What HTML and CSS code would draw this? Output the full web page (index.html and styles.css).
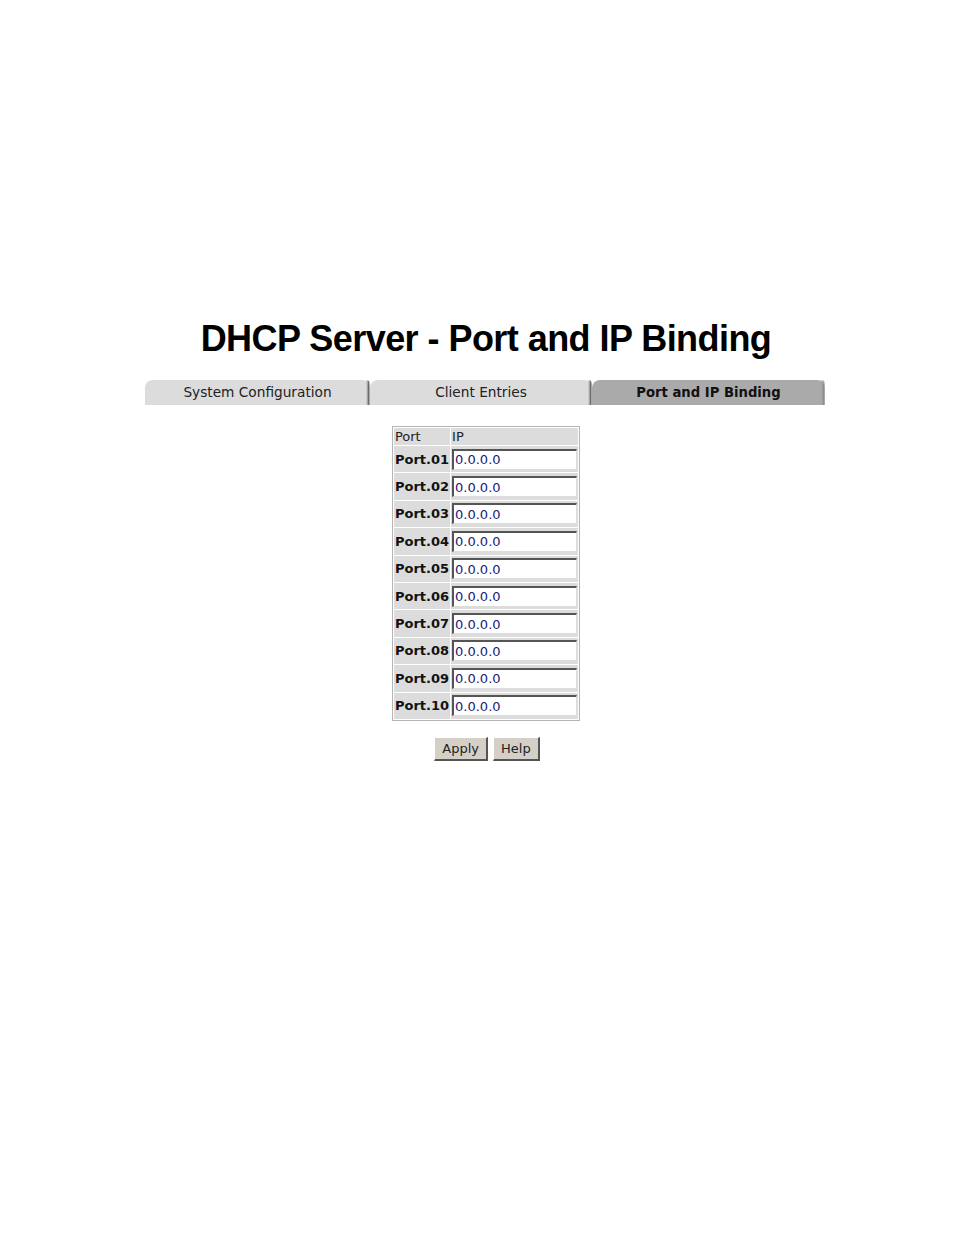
FILE: index.html
```html
<!DOCTYPE html>
<html>
<head>
<meta charset="utf-8">
<link rel="stylesheet" href="styles.css">
</head>
<body>
<div class="page">
  <h1 class="title">DHCP Server - Port and IP Binding</h1>
  <div class="tabs">
    <div class="tab t1">System Configuration</div>
    <div class="tab t2">Client Entries</div>
    <div class="tab t3 active">Port and IP Binding</div>
  </div>
  <table class="grid">
    <tr class="head"><td class="c1">Port</td><td class="c2">IP</td></tr>
    <tr><td class="c1 lbl">Port.01</td><td class="c2"><input class="ip" type="text" value="0.0.0.0"></td></tr>
    <tr><td class="c1 lbl">Port.02</td><td class="c2"><input class="ip" type="text" value="0.0.0.0"></td></tr>
    <tr><td class="c1 lbl">Port.03</td><td class="c2"><input class="ip" type="text" value="0.0.0.0"></td></tr>
    <tr><td class="c1 lbl">Port.04</td><td class="c2"><input class="ip" type="text" value="0.0.0.0"></td></tr>
    <tr><td class="c1 lbl">Port.05</td><td class="c2"><input class="ip" type="text" value="0.0.0.0"></td></tr>
    <tr><td class="c1 lbl">Port.06</td><td class="c2"><input class="ip" type="text" value="0.0.0.0"></td></tr>
    <tr><td class="c1 lbl">Port.07</td><td class="c2"><input class="ip" type="text" value="0.0.0.0"></td></tr>
    <tr><td class="c1 lbl">Port.08</td><td class="c2"><input class="ip" type="text" value="0.0.0.0"></td></tr>
    <tr><td class="c1 lbl">Port.09</td><td class="c2"><input class="ip" type="text" value="0.0.0.0"></td></tr>
    <tr><td class="c1 lbl">Port.10</td><td class="c2"><input class="ip" type="text" value="0.0.0.0"></td></tr>
  </table>
  <div class="buttons">
    <button class="btn">Apply</button>
    <button class="btn">Help</button>
  </div>
</div>
</body>
</html>
```
FILE: styles.css
```css
html, body { margin: 0; padding: 0; background: #fff; }
.page {
  width: 954px;
  box-sizing: border-box;
  padding: 318px 0 0 16px;
  display: flex;
  flex-direction: column;
  align-items: center;
  font-family: "DejaVu Sans", Verdana, sans-serif;
  color: #000;
}
.title {
  margin: 0 0 0 2px;
  font-family: "Liberation Sans", Arial, sans-serif;
  font-weight: bold;
  font-size: 36px;
  letter-spacing: -0.55px;
  line-height: 42px;
  color: #000;
}
.tabs {
  margin-top: 20px;
  display: flex;
  width: 680px;
}
.tab {
  height: 25px;
  line-height: 25px;
  text-align: center;
  font-size: 13.7px;
  color: #222;
  background: #dcdcdc;
  border-top-left-radius: 8px;
  border-top-right-radius: 8px;
  position: relative;
}
.t1 { width: 225px; }
.t2 { width: 222px; }
.t3 { width: 233px; }
.tab::after {
  content: "";
  position: absolute;
  right: 0;
  top: 0;
  width: 4px;
  height: 100%;
  background: linear-gradient(to right, #dcdcdc 0, #888 40%, #333 60%, #bbb 100%);
  border-top-right-radius: 6px;
  opacity: 0.7;
}
.tab.active {
  background: #aaaaaa;
  font-weight: bold;
  color: #111;
  font-size: 13.2px;
}
.tab.active::after {
  background: linear-gradient(to right, #aaa 0, #999 40%, #777 70%, #ccc 100%);
}
.grid {
  margin: 21px 0 0 2px;
  border-collapse: separate;
  border-spacing: 1px;
  border: 1px solid #b4b4b4;
  background: #ffffff;
  font-size: 13px;
}
.grid td {
  background: #dcdcdc;
  padding: 0 1px;
  height: 26.4px;
}
.grid tr.head td {
  height: 17px;
  color: #222;
  line-height: 17px;
}
.c1 { width: 54px; }
.lbl { font-weight: bold; color: #111; }
.c2 { padding: 0 1px; }
.ip {
  display: block;
  box-sizing: border-box;
  width: 125px;
  height: 21px;
  margin: 0;
  padding: 0 1px;
  font-family: "DejaVu Sans", Verdana, sans-serif;
  font-size: 13px;
  color: #1a1a7a;
  background: #fff;
  border: 2px solid;
  border-color: #555 #ddd #ddd #555;
  border-width: 2px 1px 1px 2px;
}
.buttons {
  margin: 16px 0 0 4px;
  display: flex;
  gap: 5px;
}
.btn {
  font-family: "DejaVu Sans", Verdana, sans-serif;
  font-size: 13px;
  color: #222;
  background: #d4d0c8;
  height: 24px;
  padding: 0 7px;
  border: 2px solid;
  border-color: #fff #555 #555 #fff;
  border-width: 1px 2px 2px 1px;
}
```
